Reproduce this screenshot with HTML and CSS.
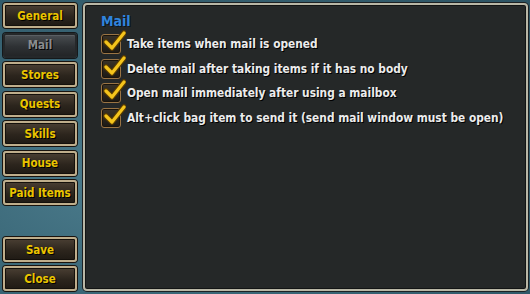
FILE: index.html
```html
<!DOCTYPE html>
<html lang="en">
<head>
    <meta charset="UTF-8">
    <title>Options - Mail</title>
    <link rel="stylesheet" href="styles.css">
</head>
<body>

<div class="window">
    <!-- Menu de la izquierda -->
    <nav class="side">
        <div class="tabs">
            <button class="btn">General</button>
            <button class="btn off">Mail</button>
            <button class="btn">Stores</button>
            <button class="btn">Quests</button>
            <button class="btn">Skills</button>
            <button class="btn">House</button>
            <button class="btn">Paid Items</button>
        </div>
        <div class="actions">
            <button class="btn">Save</button>
            <button class="btn">Close</button>
        </div>
    </nav>

    <!-- Panel de opciones -->
    <section class="panel">
        <h2 class="panel-title">Mail</h2>
        <ul class="options">
            <li><span class="check"></span>Take items when mail is opened</li>
            <li><span class="check"></span>Delete mail after taking items if it has no body</li>
            <li><span class="check"></span>Open mail immediately after using a mailbox</li>
            <li><span class="check"></span>Alt+click bag item to send it (send mail window must be open)</li>
        </ul>
    </section>
</div>

<script>
    // Dibujar la marca amarilla en cada casilla
    const tick = '<svg viewBox="0 0 24 22" width="24" height="22"><path d="M4 12 L10 18 L22 3" fill="none" stroke="#5a3c00" stroke-width="5.5" stroke-linecap="round" stroke-linejoin="round"/><path d="M4 12 L10 18 L22 3" fill="none" stroke="#f4c41c" stroke-width="3.2" stroke-linecap="round" stroke-linejoin="round"/></svg>';
    document.querySelectorAll('.check').forEach(box => {
        box.innerHTML = tick;
    });
</script>

</body>
</html>
```

FILE: styles.css
```css
body {
    margin: 0;
    padding: 0;
    width: 530px;
    height: 294px;
    overflow: hidden;
    background: radial-gradient(ellipse at 30% 60%, #4f8091 0%, #3b6878 45%, #2c5363 100%);
    font-family: "DejaVu Sans", sans-serif;
}

.window {
    display: flex;
    height: 294px;
    box-sizing: border-box;
    padding: 3px 2px 3px 3px;
    gap: 6px;
}

.side {
    width: 74px;
    display: flex;
    flex-direction: column;
    justify-content: space-between;
}

.tabs, .actions {
    display: flex;
    flex-direction: column;
    gap: 4px;
}

.tabs {
    gap: 4.5px;
}

.btn {
    height: 25px;
    width: 74px;
    padding: 0;
    font-family: "DejaVu Sans Condensed", "DejaVu Sans", sans-serif;
    font-weight: bold;
    font-size: 11.5px;
    color: #eac400;
    text-shadow: 1px 1px 0 #000;
    background: linear-gradient(#4a3f33, #2c251d 55%, #1f1a14);
    border: 2px solid #bfae8c;
    border-radius: 3px;
    box-shadow: 0 0 0 1px #1a140e, inset 0 0 0 1px #14100b;
    cursor: pointer;
}

.btn.off {
    color: #8a8c8e;
    background: linear-gradient(#4a4e52, #2e3134 55%, #232527);
    border-color: #25282a;
    box-shadow: 0 0 0 1px #15181a, inset 0 1px 0 #5a5f63;
}

.panel {
    flex: 1;
    background: #252828;
    border: 2px solid #b9b7a6;
    border-radius: 4px;
    box-shadow: 0 0 0 1px #1d2224, inset 0 0 0 1px #121414;
    padding: 8px 16px;
}

.panel-title {
    margin: 0 0 3px;
    font-family: "DejaVu Sans Condensed", "DejaVu Sans", sans-serif;
    font-size: 14px;
    font-weight: bold;
    color: #2f84dc;
    text-shadow: 1px 1px 0 #0a1420;
}

.options {
    list-style: none;
    margin: 0;
    padding: 0;
}

.options li {
    display: flex;
    align-items: center;
    height: 24.5px;
    white-space: nowrap;
    font-family: "DejaVu Sans Condensed", "DejaVu Sans", sans-serif;
    font-size: 11.8px;
    font-weight: bold;
    color: #ececec;
    text-shadow: 1px 1px 0 #000;
}

.check {
    position: relative;
    flex: none;
    width: 18px;
    height: 18px;
    margin-right: 6px;
    border: 1px solid #9a7444;
    border-radius: 3px;
    background: linear-gradient(#3a3328, #1c1914);
    box-shadow: inset 0 0 0 1px #1a140c;
}

.check svg {
    position: absolute;
    left: 0;
    top: -5px;
}
```
